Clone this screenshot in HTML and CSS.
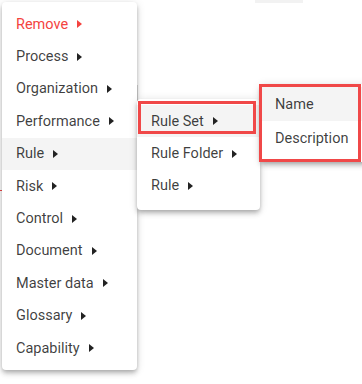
FILE: index.html
```html
<!DOCTYPE html>
<html lang="en">
<head>
    <meta charset="UTF-8">
    <title>Context menu</title>
    <link rel="stylesheet" href="styles.css">
</head>
<body>
    <div class="backdrop">
        <div class="backdrop-tab"></div>
        <div class="backdrop-rule"></div>
        <div class="backdrop-line"></div>
    </div>

    <ul class="menu menu-main">
        <li class="item item-danger">Remove<span class="caret"></span></li>
        <li class="item">Process<span class="caret"></span></li>
        <li class="item">Organization<span class="caret"></span></li>
        <li class="item">Performance<span class="caret"></span></li>
        <li class="item active">Rule<span class="caret"></span></li>
        <li class="item">Risk<span class="caret"></span></li>
        <li class="item">Control<span class="caret"></span></li>
        <li class="item">Document<span class="caret"></span></li>
        <li class="item">Master data<span class="caret"></span></li>
        <li class="item">Glossary<span class="caret"></span></li>
        <li class="item">Capability<span class="caret"></span></li>
    </ul>

    <ul class="menu menu-rule">
        <li class="item active">Rule Set<span class="caret"></span></li>
        <li class="item">Rule Folder<span class="caret"></span></li>
        <li class="item">Rule<span class="caret"></span></li>
    </ul>

    <ul class="menu menu-fields">
        <li class="item active">Name</li>
        <li class="item">Description</li>
    </ul>

    <div class="mark mark-ruleset"></div>
    <div class="mark mark-fields"></div>
</body>
</html>
```

FILE: styles.css
```css
body {
    margin: 0;
    width: 362px;
    height: 384px;
    position: relative;
    overflow: hidden;
    background: #fff;
    font-family: Roboto, "Liberation Sans", sans-serif;
    font-size: 14.5px;
    color: rgba(0, 0, 0, 0.76);
}

/* bits of the page under the menus */
.backdrop-tab {
    position: absolute;
    left: 255px;
    top: 0;
    width: 48px;
    height: 3px;
    background: #f2f2f2;
}

.backdrop-rule {
    position: absolute;
    left: 0;
    top: 190px;
    width: 7px;
    height: 1px;
    background: #f04848;
}

.backdrop-line {
    position: absolute;
    left: 137px;
    top: 85px;
    width: 1px;
    height: 16px;
    background: #d6d6d6;
}

.menu {
    position: absolute;
    margin: 0;
    list-style: none;
    background: #fff;
    border-radius: 4px;
    box-shadow: 0 2px 4px -1px rgba(0, 0, 0, 0.2),
                0 4px 5px 0 rgba(0, 0, 0, 0.14),
                0 1px 10px 0 rgba(0, 0, 0, 0.12);
}

.menu-main {
    left: 2px;
    top: 2px;
    width: 135px;
    padding: 6px 0;
}

.menu-rule {
    left: 137px;
    top: 99px;
    width: 123px;
    padding: 6px 0 8px;
}

.menu-fields {
    left: 260px;
    top: 84px;
    width: 110px;
    padding: 3px 0 7px;
}

.item {
    display: flex;
    align-items: center;
    height: 32.4px;
    padding-left: 14px;
    white-space: nowrap;
}

.menu-fields .item {
    height: 34px;
    padding-left: 15px;
}

.item.active {
    background: #f4f4f4;
}

.item-danger {
    color: #f4433f;
}

.caret {
    display: inline-block;
    width: 0;
    height: 0;
    margin-left: 9px;
    border-left: 5px solid #222;
    border-top: 4px solid transparent;
    border-bottom: 4px solid transparent;
}

.item-danger .caret {
    border-left-color: #f4433f;
}

/* red annotation boxes */
.mark {
    position: absolute;
    box-sizing: border-box;
    border: 3px solid #f04848;
}

.mark-ruleset {
    left: 138px;
    top: 101px;
    width: 118px;
    height: 33px;
}

.mark-fields {
    left: 259px;
    top: 84px;
    width: 102px;
    height: 78px;
}
```
